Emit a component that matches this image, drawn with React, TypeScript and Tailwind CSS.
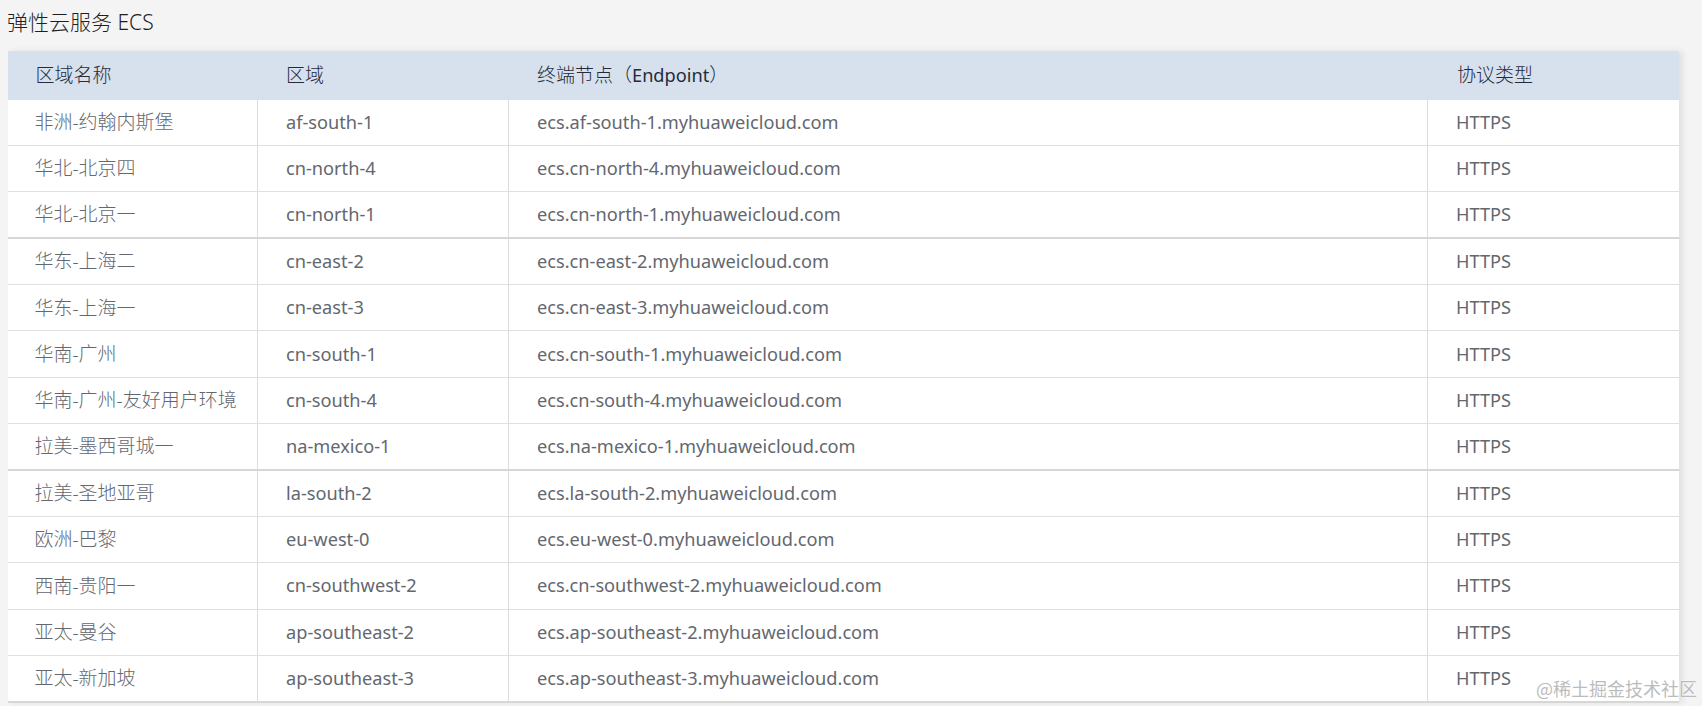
import React from "react";

const rows: [string, string, string, boolean?][] = [
  ["非洲-约翰内斯堡", "af-south-1", "ecs.af-south-1.myhuaweicloud.com"],
  ["华北-北京四", "cn-north-4", "ecs.cn-north-4.myhuaweicloud.com"],
  ["华北-北京一", "cn-north-1", "ecs.cn-north-1.myhuaweicloud.com", true],
  ["华东-上海二", "cn-east-2", "ecs.cn-east-2.myhuaweicloud.com"],
  ["华东-上海一", "cn-east-3", "ecs.cn-east-3.myhuaweicloud.com"],
  ["华南-广州", "cn-south-1", "ecs.cn-south-1.myhuaweicloud.com"],
  ["华南-广州-友好用户环境", "cn-south-4", "ecs.cn-south-4.myhuaweicloud.com"],
  ["拉美-墨西哥城一", "na-mexico-1", "ecs.na-mexico-1.myhuaweicloud.com", true],
  ["拉美-圣地亚哥", "la-south-2", "ecs.la-south-2.myhuaweicloud.com"],
  ["欧洲-巴黎", "eu-west-0", "ecs.eu-west-0.myhuaweicloud.com"],
  ["西南-贵阳一", "cn-southwest-2", "ecs.cn-southwest-2.myhuaweicloud.com"],
  ["亚太-曼谷", "ap-southeast-2", "ecs.ap-southeast-2.myhuaweicloud.com"],
  ["亚太-新加坡", "ap-southeast-3", "ecs.ap-southeast-3.myhuaweicloud.com", true],
];

const font = { fontFamily: '"Noto Sans", "Noto Sans CJK SC", sans-serif' };

export default function App() {
  return (
    <div
      className="relative w-[1702px] h-[706px] overflow-hidden bg-[#f4f4f4]"
      style={font}
    >
      <div className="h-[51px] pl-[7px] pt-[7px] text-[21px] leading-[30px] font-light text-[#1f1f1f]">
        弹性云服务 ECS
      </div>
      <div className="ml-[7.5px] w-[1671.5px] bg-white shadow-[4px_0_6px_rgba(0,0,0,0.08)]">
        <div className="flex h-[48.5px] items-center bg-[#d7e1ed] text-[18.2px] text-[#252b3a]">
          <div className="w-[250.5px] pl-[28px] text-[19px] font-light">区域名称</div>
          <div className="w-[251px] pl-[28px] text-[19px] font-light">区域</div>
          <div className="w-[919px] pl-[28px]">
            <span className="text-[19px] font-light">终端节点（</span>Endpoint<span className="text-[19px] font-light">）</span>
          </div>
          <div className="flex-1 pl-[29px] text-[19px] font-light">协议类型</div>
        </div>
        {rows.map(([name, region, ep, thick]) => (
          <div
            key={region}
            className={
              "flex h-[46.4px] items-center text-[18.2px] text-[#63676f] " +
              (thick
                ? "border-b-2 border-[#d6d6d6]"
                : "border-b border-[#dfdfdf]")
            }
          >
            <div className="flex h-full w-[250.5px] items-center border-r border-[#dcdcdc] pl-[27px] text-[19px] font-light">
              {name}
            </div>
            <div className="flex h-full w-[251px] items-center border-r border-[#dcdcdc] pl-[28px]">
              {region}
            </div>
            <div className="flex h-full w-[919px] items-center border-r border-[#dcdcdc] pl-[28px]">
              {ep}
            </div>
            <div className="flex h-full flex-1 items-center pl-[28px]">HTTPS</div>
          </div>
        ))}
      </div>
      <div
        className="absolute left-[1536px] top-[676px] text-[18px] leading-[24px] text-[#bcbcbc] [text-shadow:0_0_2px_#ffffff]"
        style={{ fontFamily: '"Noto Sans CJK SC", serif' }}
      >
        @稀土掘金技术社区
      </div>
    </div>
  );
}
